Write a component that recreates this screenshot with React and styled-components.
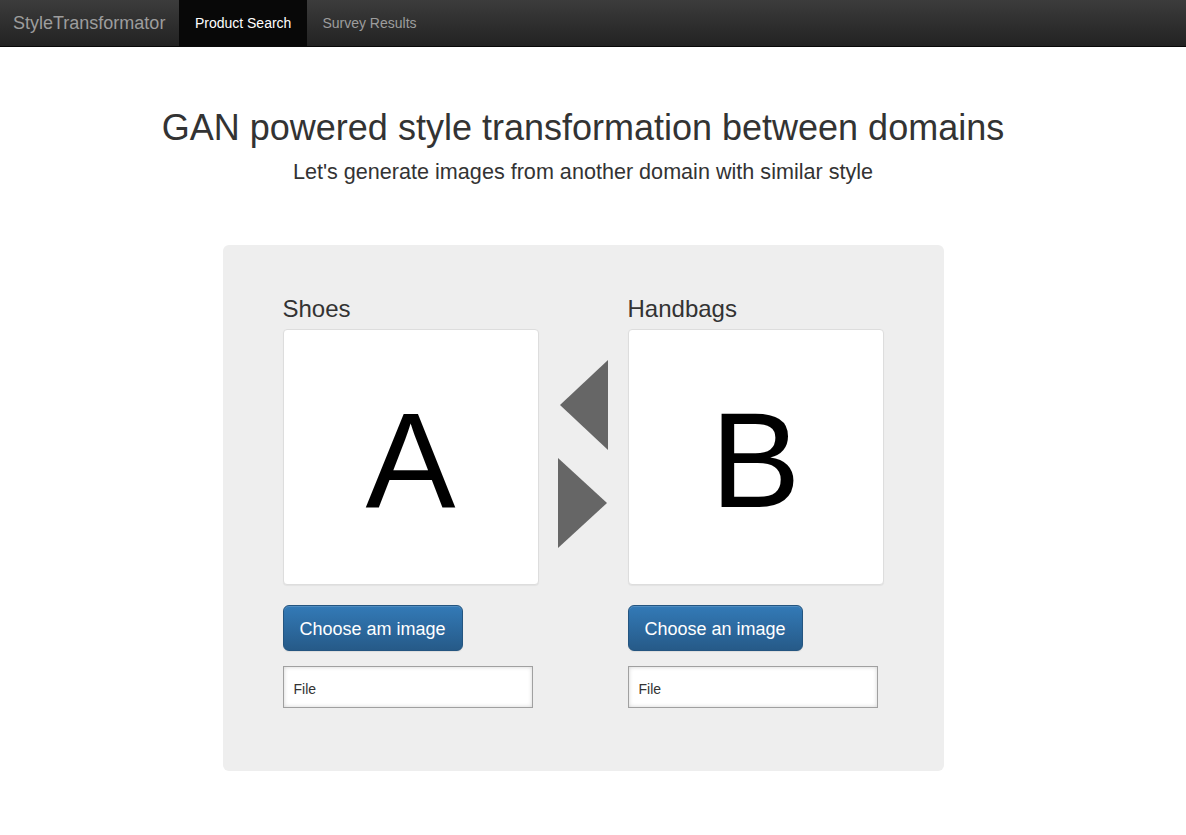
import React from 'react';
import styled, { createGlobalStyle } from 'styled-components';

const GlobalStyle = createGlobalStyle`
  body {
    margin: 0;
    background: #fff;
    color: #333;
    font-family: "Liberation Sans", Arial, Helvetica, sans-serif;
    font-size: 14px;
  }
`;

const Navbar = styled.nav`
  display: flex;
  align-items: stretch;
  height: 46px;
  background: linear-gradient(to bottom, #3c3c3c 0%, #222 100%);
  border-bottom: 1px solid #080808;
`;

const Brand = styled.a`
  display: flex;
  align-items: center;
  padding: 0 14px 0 13px;
  font-size: 18px;
  color: #9d9d9d;
  text-decoration: none;
`;

const NavItem = styled.a`
  display: flex;
  align-items: center;
  padding: 0 15.5px;
  font-size: 14px;
  text-decoration: none;
  color: ${({ active }) => (active ? '#fff' : '#9d9d9d')};
  background: ${({ active }) => (active ? '#080808' : 'transparent')};
`;

const Main = styled.main`
  display: flex;
  flex-direction: column;
  align-items: center;
  padding-right: 20px;
`;

const Title = styled.h1`
  margin: 61px 0 0;
  font-size: 36px;
  font-weight: 400;
  line-height: 1.1;
  color: #333;
`;

const Subtitle = styled.p`
  margin: 12px 0 0;
  font-size: 21.6px;
  line-height: 1.1;
  color: #333;
`;

const Panel = styled.section`
  display: flex;
  width: 721px;
  box-sizing: border-box;
  margin-top: 62px;
  padding: 51px 60px 63px;
  background: #eee;
  border-radius: 6px;
`;

const Column = styled.div`
  display: flex;
  flex-direction: column;
  width: 256px;
`;

const Label = styled.h3`
  margin: 0 0 7px;
  font-size: 24px;
  font-weight: 400;
  line-height: 26px;
  color: #333;
`;

const ImageBox = styled.div`
  display: flex;
  align-items: center;
  justify-content: center;
  width: 256px;
  height: 256px;
  box-sizing: border-box;
  background: #fff;
  border: 1px solid #ddd;
  border-radius: 4px;
  box-shadow: 0 1px 1px rgba(0, 0, 0, 0.05);
  font-size: 135px;
  line-height: 1;
  color: #000;
  padding-top: 6px;
`;

const Arrows = styled.div`
  width: 50px;
  margin: 0 20px 0 19px;
  padding-top: 33px;
`;

const Button = styled.button`
  align-self: flex-start;
  margin-top: 20px;
  height: 46px;
  padding: 3px 16px 0;
  font-family: inherit;
  font-size: 18px;
  color: #fff;
  background: linear-gradient(to bottom, #337ab7 0%, #265a88 100%);
  border: 1px solid #245580;
  border-radius: 6px;
  box-shadow: inset 0 1px 0 rgba(255, 255, 255, 0.15), 0 1px 1px rgba(0, 0, 0, 0.075);
`;

const FileField = styled.div`
  display: flex;
  align-items: center;
  margin-top: 15px;
  width: 250px;
  height: 42px;
  box-sizing: border-box;
  padding: 4px 10px 0;
  background: #fff;
  border: 1px solid #a0a0a0;
  box-shadow: inset 0 0 4px rgba(0, 0, 0, 0.18);
  font-size: 14px;
  color: #333;
`;

const Domain = ({ label, letter, button }) => (
  <Column>
    <Label>{label}</Label>
    <ImageBox>{letter}</ImageBox>
    <Button>{button}</Button>
    <FileField>File</FileField>
  </Column>
);

const App = () => (
  <>
    <GlobalStyle />
    <Navbar>
      <Brand href="#">StyleTransformator</Brand>
      <NavItem href="#" active>Product Search</NavItem>
      <NavItem href="#">Survey Results</NavItem>
    </Navbar>
    <Main>
      <Title>GAN powered style transformation between domains</Title>
      <Subtitle>Let's generate images from another domain with similar style</Subtitle>
      <Panel>
        <Domain label="Shoes" letter="A" button="Choose am image" />
        <Arrows>
          <svg width="50" height="220" viewBox="0 0 50 220">
            <polygon points="50,31 50,121 2,76" fill="#666" />
            <polygon points="0,129 0,219 49,174" fill="#666" />
          </svg>
        </Arrows>
        <Domain label="Handbags" letter="B" button="Choose an image" />
      </Panel>
    </Main>
  </>
);

export default App;
